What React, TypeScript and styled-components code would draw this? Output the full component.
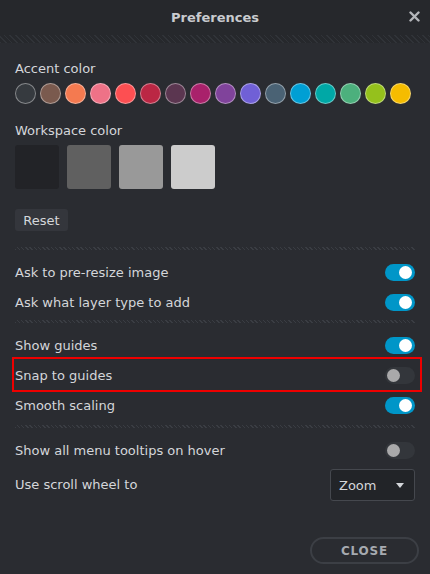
import React from 'react';
import styled, { createGlobalStyle, css } from 'styled-components';

const GlobalStyle = createGlobalStyle`
  html, body {
    margin: 0;
    padding: 0;
    background: #2a2c31;
  }
  body {
    font-family: "DejaVu Sans", "Liberation Sans", sans-serif;
    color: #d4d6da;
  }
`;

const accentColors = [
  '#363a3f',
  '#7a5a4e',
  '#f47a50',
  '#ee7287',
  '#fd4f52',
  '#bb2744',
  '#5b3650',
  '#a9216b',
  '#80439b',
  '#7060d6',
  '#4a6274',
  '#009fd4',
  '#00a8a6',
  '#4cb07d',
  '#95c11c',
  '#f5bc00'
];

const workspaceColors = ['#222327', '#606060', '#999999', '#cccccc'];

const App = () => {
  return (
    <>
      <GlobalStyle />
      <Dialog>
        <Header>
          <Title>Preferences</Title>
          <CloseIcon aria-label='close'>
            <svg width='11' height='11' viewBox='0 0 11 11'>
              <path
                d='M1.5 1.5 L9.5 9.5 M9.5 1.5 L1.5 9.5'
                stroke='#b4b6ba'
                strokeWidth='2.4'
                strokeLinecap='round'
              />
            </svg>
          </CloseIcon>
        </Header>
        <Stripe />
        <Content>
          <Label>Accent color</Label>
          <Swatches>
            {accentColors.map(color => (
              <Dot key={color} $color={color} />
            ))}
          </Swatches>

          <Label $top={19}>Workspace color</Label>
          <Tiles>
            {workspaceColors.map(color => (
              <Tile key={color} $color={color} />
            ))}
          </Tiles>

          <ResetButton>Reset</ResetButton>

          <Divider $top={16} />
          <Row>
            <span>Ask to pre-resize image</span>
            <Toggle $on />
          </Row>
          <Row>
            <span>Ask what layer type to add</span>
            <Toggle $on />
          </Row>

          <Divider />
          <Row>
            <span>Show guides</span>
            <Toggle $on />
          </Row>
          <Row $highlight>
            <span>Snap to guides</span>
            <Toggle />
          </Row>
          <Row>
            <span>Smooth scaling</span>
            <Toggle $on />
          </Row>

          <Divider $top={5} />
          <Row>
            <span>Show all menu tooltips on hover</span>
            <Toggle />
          </Row>
          <SelectRow>
            <span>Use scroll wheel to</span>
            <Select>
              <span>Zoom</span>
              <Caret />
            </Select>
          </SelectRow>
        </Content>
        <Footer>
          <CloseButton>CLOSE</CloseButton>
        </Footer>
      </Dialog>
    </>
  );
};

const Dialog = styled.div`
  width: 430px;
  height: 574px;
  background: #2a2c31;
  display: flex;
  flex-direction: column;
  font-size: 13px;
`;

const Header = styled.header`
  height: 35px;
  background: #26282c;
  display: flex;
  align-items: center;
  justify-content: center;
  position: relative;
`;

const Title = styled.h1`
  margin: 0;
  font-size: 13px;
  font-weight: bold;
  color: #c9cbcf;
`;

const CloseIcon = styled.span`
  position: absolute;
  right: 10px;
  top: 11px;
  display: flex;
`;

const Stripe = styled.div`
  height: 8px;
  background: repeating-linear-gradient(
    45deg,
    #303338 0px,
    #303338 1px,
    #26282c 1px,
    #26282c 4px
  );
`;

const Content = styled.section`
  padding: 18px 15px 0;
  display: flex;
  flex-direction: column;
`;

const Label = styled.div<{ $top?: number }>`
  margin-top: ${p => p.$top || 0}px;
  line-height: 16px;
  color: #d4d6da;
`;

const Swatches = styled.div`
  display: flex;
  gap: 4px;
  margin-top: 6px;
`;

const Dot = styled.span<{ $color: string }>`
  width: 21px;
  height: 21px;
  box-sizing: border-box;
  border-radius: 50%;
  background: ${p => p.$color};
  border: 1px solid rgba(255, 255, 255, 0.4);
`;

const Tiles = styled.div`
  display: flex;
  gap: 8px;
  margin-top: 6px;
`;

const Tile = styled.span<{ $color: string }>`
  width: 44px;
  height: 44px;
  border-radius: 3px;
  background: ${p => p.$color};
`;

const ResetButton = styled.button`
  align-self: flex-start;
  margin-top: 20px;
  height: 22px;
  width: 53px;
  padding: 0;
  border: none;
  border-radius: 3px;
  background: #34363c;
  color: #d4d6da;
  font-family: inherit;
  font-size: 13px;
`;

const Divider = styled.div<{ $top?: number }>`
  height: 3px;
  margin: ${p => p.$top ?? 3}px 0 7px;
  background: repeating-linear-gradient(
    45deg,
    #3a3d43 0px,
    #3a3d43 1px,
    #2a2c31 1px,
    #2a2c31 3px
  );
`;

const Row = styled.div<{ $highlight?: boolean }>`
  height: 30px;
  display: flex;
  align-items: center;
  justify-content: space-between;
  position: relative;
  ${p =>
    p.$highlight &&
    css`
      &::after {
        content: '';
        position: absolute;
        left: -3px;
        right: -7px;
        top: -3px;
        bottom: -2px;
        border: 2px solid #ee0000;
        pointer-events: none;
      }
    `}
`;

const Toggle = styled.span<{ $on?: boolean }>`
  width: 30px;
  height: 17px;
  border-radius: 9px;
  background: ${p => (p.$on ? '#0096c8' : '#33363b')};
  position: relative;
  &::after {
    content: '';
    position: absolute;
    top: 2px;
    ${p => (p.$on ? 'right: 3px;' : 'left: 2px;')}
    width: 13px;
    height: 13px;
    border-radius: 50%;
    background: ${p => (p.$on ? '#ffffff' : '#a9a9aa')};
  }
`;

const SelectRow = styled(Row)`
  height: 36px;
  align-items: flex-end;
  & > span:first-child {
    line-height: 32px;
  }
`;

const Select = styled.div`
  width: 85px;
  height: 32px;
  box-sizing: border-box;
  border: 1px solid #45484e;
  border-radius: 3px;
  background: #222428;
  display: flex;
  align-items: center;
  justify-content: space-between;
  padding: 0 10px 0 8px;
  color: #d4d6da;
`;

const Caret = styled.span`
  width: 0;
  height: 0;
  border-left: 4px solid transparent;
  border-right: 4px solid transparent;
  border-top: 5px solid #d4d6da;
`;

const Footer = styled.footer`
  display: flex;
  justify-content: flex-end;
  padding: 36px 11px 0 0;
`;

const CloseButton = styled.button`
  width: 109px;
  height: 27px;
  border: 2px solid #3c3f45;
  border-radius: 14px;
  background: transparent;
  color: #a6aab0;
  font-family: inherit;
  font-weight: bold;
  font-size: 12px;
  letter-spacing: 0.8px;
`;

export default App;
